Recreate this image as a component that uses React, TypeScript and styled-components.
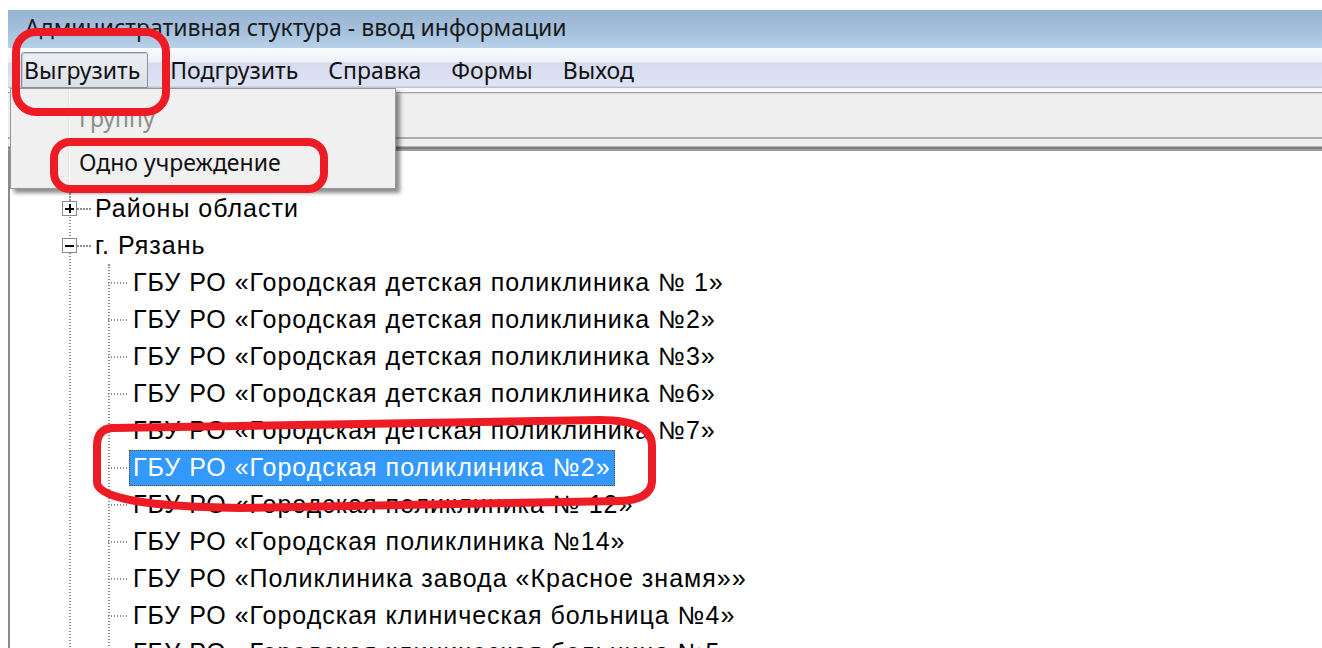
import React from 'react';
import styled, {createGlobalStyle} from 'styled-components';

const GlobalStyle = createGlobalStyle`
  html, body {
    margin: 0;
    padding: 0;
    background: #FFFFFF;
    overflow: hidden;
  }
`;

const Page = styled.div`
  position: relative;
  width: 1322px;
  height: 648px;
  padding: 10px 0 0 8px;
  box-sizing: border-box;
  overflow: hidden;
`;

const Window = styled.div`
  display: flex;
  flex-direction: column;
  height: 100%;
  font-family: "Noto Sans", "Open Sans", sans-serif;

  & > * {
    flex-shrink: 0;
  }
`;

const TitleBar = styled.div`
  height: 38px;
  box-sizing: border-box;
  display: flex;
  align-items: center;
  padding: 0 0 5px 17px;
  background: linear-gradient(to bottom, #97B3D2 0%, #A6C2DE 60%, #B8D1E9 100%);
  font-size: 23px;
  color: #1A1A1A;
`;

const MenuBar = styled.div`
  height: 40px;
  box-sizing: border-box;
  display: flex;
  align-items: flex-end;
  padding-left: 13px;
  background: linear-gradient(to bottom, #FCFCFE 0, #EFF1F8 14px, #D5DAED 15px, #DFE4F5 38px, #BCC2D6 39px);
`;

const MenuItem = styled.div<{ $open?: boolean }>`
  height: 36px;
  box-sizing: border-box;
  display: flex;
  align-items: center;
  font-size: 23px;
  color: #111111;
  padding: ${p => p.$open ? '0 7px 0 2px' : '0 14px'};
  margin-right: ${p => p.$open ? '7px' : '0'};
  border: ${p => p.$open ? '1px solid #8B8F96' : '1px solid transparent'};
  border-radius: 3px 3px 0 0;
  background: ${p => p.$open ? 'linear-gradient(to bottom, #ECEFF3, #DCE1E8)' : 'transparent'};
  box-shadow: ${p => p.$open ? 'inset 1px 1px 0 #C9CED6' : 'none'};
`;

const Divider = styled.div`
  height: 6px;
  background: linear-gradient(to bottom, #F6F6F6 0 4px, #A3A3A3 4px 5px, #D8D8D8 5px 6px);
`;

const ToolStrip = styled.div`
  height: 43px;
  background: #EFEFEF;
  border-bottom: 2px solid #ABABAB;
`;

const Splitter = styled.div`
  height: 12px;
  background: linear-gradient(to bottom, #EEEEEE 0 7px, #B5B5B5 7px 8px, #7E7E7E 8px 10px, #9C9C9C 10px 12px);
`;

const TreePanel = styled.div`
  flex: 1 1 auto;
  min-height: 0;
  overflow: hidden;
  background: #FFFFFF;
  border-left: 2px solid #8A8A8A;
  padding-top: 39px;
  font-family: "Liberation Sans", Arial, sans-serif;
  font-size: 25px;
  letter-spacing: 1px;
  color: #000000;
`;

const dots = (dir: string) =>
    `repeating-linear-gradient(${dir}, #8E8E8E 0 1.5px, transparent 1.5px 3px)`;

// siblings of the first level share one dotted trunk
const RootList = styled.div`
  background-image: ${dots('to bottom')};
  background-size: 2px 100%;
  background-repeat: no-repeat;
  background-position: 59px 0;
`;

const NodeRow = styled.div`
  height: 37px;
  display: flex;
  align-items: center;
  padding-left: 52px;
`;

const Expander = styled.div<{ $open?: boolean }>`
  position: relative;
  width: 15px;
  height: 15px;
  box-sizing: border-box;
  border: 1.5px solid #8A8A8A;
  background: #FFFFFF;
  display: flex;
  align-items: center;
  justify-content: center;

  &::before, &::after {
    content: '';
    position: absolute;
    background: #000000;
  }
  &::before {
    width: 9px;
    height: 2px;
  }
  &::after {
    width: 2px;
    height: 9px;
    display: ${p => p.$open ? 'none' : 'block'};
  }
`;

const Connector = styled.div<{ $width: number }>`
  width: ${p => p.$width}px;
  height: 2px;
  background-image: ${dots('to right')};
`;

const Label = styled.div<{ $selected?: boolean }>`
  height: 36px;
  box-sizing: border-box;
  display: flex;
  align-items: center;
  white-space: nowrap;
  padding: 0 4px;
  color: ${p => p.$selected ? '#FFFFFF' : '#000000'};
  background: ${p => p.$selected ? '#3399FF' : 'transparent'};
  outline: ${p => p.$selected ? '1.5px dotted #6B4A1A' : 'none'};
  outline-offset: -1.5px;
`;

const ChildList = styled.div`
  margin-left: 98px;
  background-image: ${dots('to bottom')};
  background-size: 2px 100%;
  background-repeat: no-repeat;
`;

const ChildRow = styled.div`
  height: 37px;
  display: flex;
  align-items: center;
`;

const DropMenu = styled.div`
  position: absolute;
  left: 10px;
  top: 88px;
  width: 386px;
  height: 101px;
  box-sizing: border-box;
  border: 1px solid #979797;
  background: linear-gradient(to right, #F0F0F0 0 57px, #E2E3E3 57px 58px, #FFFFFF 58px 59px, #F0F0F0 59px);
  box-shadow: 4px 4px 4px rgba(0, 0, 0, 0.45);
  padding-top: 7px;
  font-family: "Noto Sans", "Open Sans", sans-serif;
  font-size: 23px;
`;

const DropItem = styled.div<{ $disabled?: boolean }>`
  height: 44px;
  display: flex;
  align-items: center;
  padding-left: 68px;
  color: ${p => p.$disabled ? '#8D8D8D' : '#111111'};
`;

const Marks = styled.svg`
  position: absolute;
  left: 0;
  top: 0;
  pointer-events: none;
`;

const menu = ['Подгрузить', 'Справка', 'Формы', 'Выход'];

const clinics = [
    'ГБУ РО «Городская детская поликлиника № 1»',
    'ГБУ РО «Городская детская поликлиника №2»',
    'ГБУ РО «Городская детская поликлиника №3»',
    'ГБУ РО «Городская детская поликлиника №6»',
    'ГБУ РО «Городская детская поликлиника №7»',
    'ГБУ РО «Городская поликлиника №2»',
    'ГБУ РО «Городская поликлиника № 12»',
    'ГБУ РО «Городская поликлиника №14»',
    'ГБУ РО «Поликлиника завода «Красное знамя»»',
    'ГБУ РО «Городская клиническая больница №4»',
    'ГБУ РО «Городская клиническая больница №5»',
];

const selected = 5;

export default function App() {
    return (
        <Page>
            <GlobalStyle/>
            <Window>
                <TitleBar>Административная стуктура - ввод информации</TitleBar>
                <MenuBar>
                    <MenuItem $open>Выгрузить</MenuItem>
                    {menu.map(m => <MenuItem key={m}>{m}</MenuItem>)}
                </MenuBar>
                <Divider/>
                <ToolStrip/>
                <Splitter/>
                <TreePanel>
                    <RootList>
                        <NodeRow>
                            <Expander/>
                            <Connector $width={14}/>
                            <Label>Районы области</Label>
                        </NodeRow>
                        <NodeRow>
                            <Expander $open/>
                            <Connector $width={14}/>
                            <Label>г. Рязань</Label>
                        </NodeRow>
                        <ChildList>
                            {clinics.map((c, i) => (
                                <ChildRow key={c}>
                                    <Connector $width={21}/>
                                    <Label $selected={i === selected}>{c}</Label>
                                </ChildRow>
                            ))}
                        </ChildList>
                    </RootList>
                </TreePanel>
            </Window>

            <DropMenu>
                <DropItem $disabled>Группу</DropItem>
                <DropItem>Одно учреждение</DropItem>
            </DropMenu>

            <Marks width="1322" height="648" viewBox="0 0 1322 648">
                <g fill="none" stroke="#ED1C24" strokeWidth="8" strokeLinejoin="round">
                    <rect x="16" y="32" width="150" height="80" rx="20"/>
                    <rect x="54" y="142" width="270" height="47" rx="16"/>
                    <path d="M 112,428 L 600,420 Q 652,420 652,446 L 652,482 Q 650,500 620,501 L 240,508 Q 97,506 97,482 L 97,446 Q 97,429 112,428 Z"/>
                </g>
            </Marks>
        </Page>
    );
}
